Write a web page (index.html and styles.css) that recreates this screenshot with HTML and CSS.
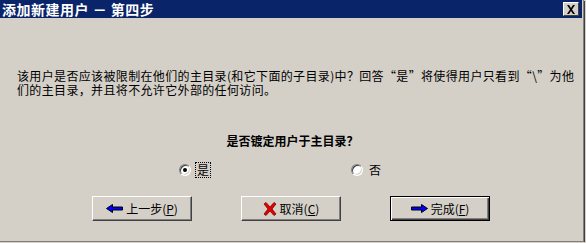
FILE: index.html
```html
<!DOCTYPE html>
<html lang="zh-CN">
<head>
<meta charset="utf-8">
<title>添加新建用户 - 第四步</title>
<link rel="stylesheet" href="styles.css">
</head>
<body>
<div class="window">
  <div class="titlebar">
    <span class="title">添加新建用户 － 第四步</span>
    <span class="close">
      <svg width="10" height="9" viewBox="0 0 10 9"><path d="M1 0h2l2 3l2-3h2l-3 4.5l3 4.5h-2l-2-3l-2 3h-2l3-4.5z" fill="#000"/></svg>
    </span>
  </div>
  <div class="desc">
    <div class="line">该用户是否应该被限制在他们的主目录(和它下面的子目录)中？回答“是”将使得用户只看到“\”为他</div>
    <div class="line">们的主目录，并且将不允许它外部的任何访问。</div>
  </div>
  <div class="question">是否镀定用户于主目录？</div>
  <div class="radios">
    <label class="opt first"><span class="radio checked"></span><span class="lbl focus">是</span></label>
    <label class="opt"><span class="radio"></span><span class="lbl">否</span></label>
  </div>
  <div class="buttons">
    <span class="btn">
      <svg class="ico" width="17" height="9" viewBox="0 0 17 9"><path d="M0.5 4.5L6.5 0.5V3H16.5V6H6.5V8.5Z" fill="#0000ff" stroke="#000" stroke-width="1"/></svg>
      <span>上一步(<u>P</u>)</span>
    </span>
    <span class="btn">
      <svg class="ico" width="14" height="14" viewBox="0 0 14 14"><path d="M1 2L3 0.5L7 5L11 0.5L13 2L9 7L13 12L11 13.5L7 9L3 13.5L1 12L5 7Z" fill="#e00000" stroke="#800000" stroke-width="0.8"/></svg>
      <span>取消(<u>C</u>)</span>
    </span>
    <span class="btn default">
      <svg class="ico" width="17" height="9" viewBox="0 0 17 9"><path d="M16.5 4.5L10.5 0.5V3H0.5V6H10.5V8.5Z" fill="#0000ff" stroke="#000" stroke-width="1"/></svg>
      <span>完成(<u>F</u>)</span>
    </span>
  </div>
</div>
</body>
</html>
```
FILE: styles.css
```css
html, body {
  margin: 0;
  padding: 0;
  background: #d4d0c8;
}
body {
  font-family: "Noto Sans CJK SC", "Noto Sans", sans-serif;
  font-size: 12px;
  color: #000;
}
.window {
  width: 583px;
  height: 241px;
  background: #d4d0c8;
  border-right: 1px solid #808080;
  border-bottom: 1px solid #808080;
  box-shadow: 1px 1px 0 #404040;
  overflow: hidden;
}
.titlebar {
  height: 18px;
  margin-right: 1px;
  background: #0a246a;
  display: flex;
  align-items: center;
  justify-content: space-between;
  padding: 0 3px 0 2px;
}
.title {
  color: #fff;
  font-weight: bold;
  font-size: 14px;
  line-height: 18px;
  letter-spacing: 0.5px;
}
.close {
  width: 14px;
  height: 12px;
  background: #d4d0c8;
  border-top: 1px solid #fff;
  border-left: 1px solid #fff;
  border-right: 1px solid #404040;
  border-bottom: 1px solid #404040;
  display: flex;
  align-items: center;
  justify-content: center;
}
.desc {
  margin: 51px 0 0 17px;
  white-space: nowrap;
  letter-spacing: 0.35px;
}
.line {
  height: 14px;
  line-height: 14px;
}
.question {
  margin: 37px 0 0 0;
  text-align: center;
  font-weight: bold;
  line-height: 14px;
  padding-left: 2px;
}
.radios {
  margin-top: 14px;
  padding-left: 179px;
  display: flex;
  align-items: center;
  height: 16px;
}
.opt {
  display: flex;
  align-items: center;
  gap: 4px;
}
.opt.first {
  width: 172px;
}
.radio {
  width: 10px;
  height: 10px;
  border-radius: 50%;
  background: #fff;
  border: 1px solid;
  border-color: #808080 #fff #fff #808080;
  box-shadow: inset 1px 1px 0 #404040, inset -1px -1px 0 #d4d0c8;
  display: flex;
  align-items: center;
  justify-content: center;
}
.radio.checked::after {
  content: "";
  width: 4px;
  height: 4px;
  border-radius: 50%;
  background: #000;
}
.lbl {
  line-height: 14px;
  padding: 0 1px;
  border: 1px dotted transparent;
}
.lbl.focus {
  border-color: #000;
}
.buttons {
  margin-top: 18px;
  padding-left: 92px;
  display: flex;
  gap: 49px;
}
.btn {
  box-sizing: border-box;
  width: 100px;
  height: 25px;
  display: flex;
  align-items: center;
  justify-content: center;
  gap: 3px;
  background: #d4d0c8;
  border-top: 1px solid #fff;
  border-left: 1px solid #fff;
  border-right: 1px solid #404040;
  border-bottom: 1px solid #404040;
  box-shadow: inset -1px -1px 0 #808080;
  line-height: 14px;
}
.btn.default {
  border: 1px solid #000;
  box-shadow: inset 1px 1px 0 #fff, inset -1px -1px 0 #404040, inset -2px -2px 0 #808080;
}
.ico {
  display: block;
  flex: none;
}
u {
  text-decoration: underline;
}
```
